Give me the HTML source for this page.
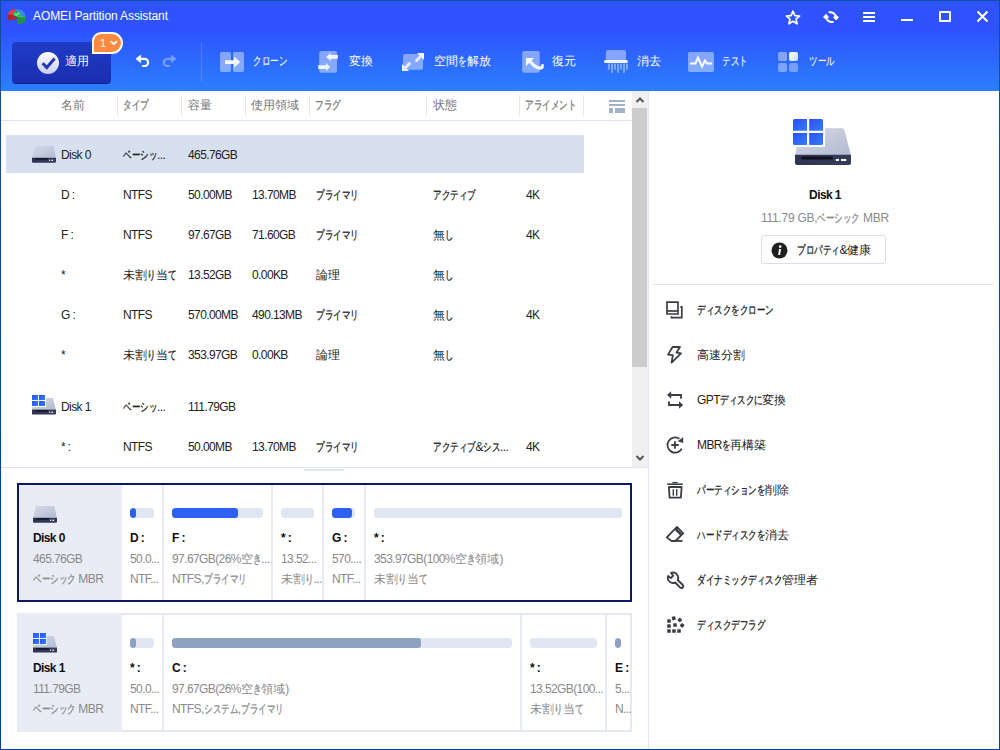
<!DOCTYPE html>
<html><head><meta charset="utf-8">
<style>
*{box-sizing:border-box;margin:0;padding:0}
html,body{width:1000px;height:750px;overflow:hidden;background:#fff}
body{font-family:"Liberation Sans",sans-serif;position:relative;color:#222}
.a{position:absolute;white-space:nowrap}
#frame{position:absolute;left:0;top:0;width:1000px;height:750px;pointer-events:none;z-index:50}
#frame i{position:absolute;display:block}
#hdr{position:absolute;left:0;top:0;width:1000px;height:91px;background:linear-gradient(to bottom,#2d52fe 0px,#2e53fe 30px,#2b7ffc 91px)}
.tt{color:#fff;font-size:12px}
.k{display:inline-block;transform:scaleX(.71);transform-origin:0 50%;-webkit-text-stroke:.3px currentColor}
.l{letter-spacing:-0.6px}
.tt .l{letter-spacing:-0.1px}
.tl .k{-webkit-text-stroke:.1px currentColor}
.rp .l{letter-spacing:-0.25px}
.tl{color:#fff;font-size:12px;top:53px;line-height:16px}
.hd{color:#777;font-size:12px;top:97px;line-height:16px}
.sep{position:absolute;top:95px;width:1px;height:21px;background:#e6eaf0}
.r{font-size:12px;line-height:16px;color:#222}
.bar{position:absolute;height:10px;border-radius:3px;background:#e1e7f2;overflow:hidden}
.bar i{position:absolute;left:0;top:0;bottom:0;background:#2d62f0;border-radius:3px}
.bar.g i{background:#8da2c0}
.pl{font-size:12px;line-height:16px;font-weight:bold;color:#111}
.ps{font-size:12px;line-height:16px;color:#8a8a8a}
.vs{position:absolute;width:2px;background:#e6eaf2}
.op{font-size:12px;line-height:16px;color:#222;left:697px}
.oi{position:absolute;left:665px;width:20px;height:20px}
</style></head><body>
<svg width="0" height="0" style="position:absolute"><defs>
<linearGradient id="dg" x1="0" y1="0" x2="1" y2="1"><stop offset="0" stop-color="#d6dae8"/><stop offset="1" stop-color="#b3bbd1"/></linearGradient>
<linearGradient id="db" x1="0" y1="0" x2="1" y2="0"><stop offset="0" stop-color="#2d3352"/><stop offset="1" stop-color="#363c58"/></linearGradient>
<linearGradient id="wg" x1="0" y1="0" x2="1" y2="1"><stop offset="0" stop-color="#2f4cf8"/><stop offset="1" stop-color="#2f80f8"/></linearGradient>
<symbol id="disk" viewBox="0 0 24 17"><path d="M3.6 0 L20.6 0 Q21.5 0 21.7 1 L23.8 11.6 L0.2 11.6 L2.5 1 Q2.7 0 3.6 0 Z" fill="url(#dg)"/><path d="M0 11.4 H24 V15.6 Q24 16.8 22.8 16.8 H1.2 Q0 16.8 0 15.6 Z" fill="url(#db)"/><rect x="0" y="11.4" width="24" height=".6" fill="#e8ebf4" opacity=".5"/><rect x="3" y="12.2" width="13" height="1.3" rx=".6" fill="#0c0f1e"/><rect x="17" y="13.7" width="1.1" height="1.2" fill="#fff"/><rect x="19.3" y="13.7" width="1.8" height="1.2" fill="#fff"/></symbol>
<symbol id="diskw" viewBox="0 0 24 20"><path d="M3 3 L20.2 3 Q20.9 3 21.1 3.8 L23.9 14.5 L0.1 14.5 L0.5 3 Z" fill="url(#dg)"/><path d="M0 14.4 H24 V18.4 Q24 19.6 22.8 19.6 H1.2 Q0 19.6 0 18.4 Z" fill="url(#db)"/><rect x="3" y="15.2" width="13" height="1.3" rx=".6" fill="#0c0f1e"/><rect x="17" y="16.6" width="1.1" height="1.2" fill="#fff"/><rect x="19.3" y="16.6" width="1.8" height="1.2" fill="#fff"/><rect x="-1" y="-1" width="15" height="13" style="fill:var(--bg)"/><g fill="url(#wg)"><rect x="0" y="0" width="6" height="5"/><rect x="7" y="0" width="6" height="5"/><rect x="0" y="6" width="6" height="5"/><rect x="7" y="6" width="6" height="5"/></g></symbol>
</defs></svg>
<div id="hdr"></div>
<div id="frame"><i style="left:0;top:0;width:1000px;height:1px;background:#10509a"></i><i style="left:0;top:749px;width:1000px;height:1px;background:#0041a8"></i><i style="left:0;top:0;width:1px;height:750px;background:linear-gradient(#10509a,#0041a8)"></i><i style="left:999px;top:0;width:1px;height:750px;background:linear-gradient(#10509a,#0041a8)"></i></div>

<!-- title bar -->
<svg class="a" style="left:0;top:0" width="30" height="30" viewBox="0 0 30 30"><path d="M8 14.5 L8 20.5 L16.8 19 L16.5 14.5 Z" fill="#b32626"/><path d="M8 14.5 Q8.3 9.6 15.8 9 L16.5 14.5 Z" fill="#ec3b3b"/><path d="M16 9 Q24.2 9.3 25.2 14.5 L25.2 17 L18 16 Z" fill="#3a88ee"/><path d="M17 15.6 L25.2 16.6 L25.2 21 Q24.5 23.6 17.4 24 Z" fill="#249144"/><path d="M17 15.6 L25.2 16.6 L25.2 17.6 L17.1 17 Z" fill="#3cc46a"/><ellipse cx="17" cy="14" rx="4" ry="2.5" fill="#25c353"/><path d="M15 14 L16.6 15.2 L19.2 12.8" fill="none" stroke="#e4ffe4" stroke-width=".9"/></svg>
<div class="a tt" style="left:33px;top:8px;line-height:16px"><span class="l">AOMEI Partition Assistant</span></div>
<!-- window controls -->
<svg class="a" style="left:784px;top:8.5px" width="18" height="18" viewBox="0 0 18 18"><path d="M9 2.2 L10.9 6.6 L15.6 7 L12 10.1 L13.1 14.8 L9 12.3 L4.9 14.8 L6 10.1 L2.4 7 L7.1 6.6 Z" fill="none" stroke="#fff" stroke-width="1.7" stroke-linejoin="round"/></svg>
<svg class="a" style="left:822px;top:8px" width="18" height="18" viewBox="0 0 18 18"><path d="M7.4 4.2 Q12.2 3.6 14 8.6" fill="none" stroke="#fff" stroke-width="2" stroke-linecap="round"/><path d="M10.8 14 Q6 14.6 4 9.6" fill="none" stroke="#fff" stroke-width="2" stroke-linecap="round"/><path d="M11 9.2 L14 6.8 L17 9.2 L14 12.4 Z" fill="#fff"/><path d="M1 9.2 L4 5.8 L7 9.2 L4 11.4 Z" fill="#fff"/></svg>
<svg class="a" style="left:860px;top:8px" width="18" height="18" viewBox="0 0 18 18"><rect x="3" y="4" width="12" height="2" fill="#fff"/><rect x="3" y="8" width="12" height="2" fill="#fff"/><rect x="3" y="12" width="12" height="2" fill="#fff"/></svg>
<div class="a" style="left:901px;top:19px;width:12px;height:2px;background:#fff"></div>
<div class="a" style="left:939px;top:11px;width:12px;height:11px;border:2px solid #fff;border-radius:1px"></div>
<svg class="a" style="left:974px;top:8px" width="18" height="18" viewBox="0 0 18 18"><path d="M3.5 3.5 L13.5 13.5 M13.5 3.5 L3.5 13.5" stroke="#fff" stroke-width="2"/></svg>

<!-- toolbar -->
<div class="a" style="left:12px;top:42px;width:99px;height:41px;border-radius:4px;background:linear-gradient(#1f3cc6,#1a2db0);box-shadow:0 1px 0 #13208a"></div>
<div class="a" style="left:37px;top:52px;width:22px;height:22px;border-radius:50%;background:linear-gradient(#ffffff,#c8ccf0)"></div>
<svg class="a" style="left:37px;top:52px" width="22" height="22" viewBox="0 0 22 22"><path d="M5.6 11.3 L9.8 15.6 L17.6 6.6" fill="none" stroke="#2536b4" stroke-width="3"/></svg>
<div class="a tl" style="left:65px">適用</div>
<svg class="a" style="left:90px;top:31px" width="34" height="24" viewBox="0 0 34 24"><path d="M3 22 L3 10 A8 8 0 0 1 11 2 L22 2 A10 10 0 0 1 22 22 Z" fill="#ff8a3f" stroke="#fff" stroke-width="2"/><path d="M21.2 10.6 L23.8 13.2 L26.4 10.6" fill="none" stroke="#fff" stroke-width="1.8" stroke-linecap="round"/></svg>
<div class="a" style="left:100px;top:35px;font-size:11px;line-height:16px;color:#fff"><span class="l">1</span></div>
<svg class="a" style="left:134px;top:52px" width="18" height="18" viewBox="0 0 18 18"><path d="M6 6.8 H10.5 A3.6 3.6 0 0 1 10.5 14 H8.2" fill="none" stroke="#fff" stroke-width="2.2"/><path d="M1.9 6.8 L6.7 3.1 L6.7 10.7 Z" fill="#fff" stroke="#fff" stroke-width=".6" stroke-linejoin="round"/></svg>
<svg class="a" style="left:160px;top:52px" width="18" height="18" viewBox="0 0 18 18"><g opacity=".35"><path d="M12 6.8 H7.5 A3.6 3.6 0 0 0 7.5 14 H9.8" fill="none" stroke="#fff" stroke-width="2.2"/><path d="M16.1 6.8 L11.3 3.1 L11.3 10.7 Z" fill="#fff" stroke="#fff" stroke-width=".6" stroke-linejoin="round"/></g></svg>
<div class="a" style="left:201px;top:42px;width:1px;height:39px;background:rgba(255,255,255,.18)"></div>

<!-- clone -->
<svg class="a" style="left:219px;top:51px" width="26" height="22" viewBox="0 0 26 22"><rect x="1" y="1" width="11" height="20" rx="2" fill="rgba(255,255,255,.42)"/><rect x="14" y="1" width="11" height="20" rx="2" fill="rgba(255,255,255,.42)"/><path d="M6 9.3 L15 9.3 L15 5.5 L21.3 11.1 L15 16.7 L15 13 L6 13 Z" fill="#f2f5fd"/></svg>
<div class="a tl" style="left:253px"><span class="k" style="margin-right:-13.92px">クローン</span></div>
<!-- convert -->
<svg class="a" style="left:318px;top:50px" width="22" height="24" viewBox="0 0 22 24"><rect x="1.2" y="1" width="17.8" height="21.7" rx="2" fill="rgba(255,255,255,.42)"/><path d="M19.9 5 L12.8 5 L12.8 3 L8.1 6.9 L12.8 10.9 L12.8 8.8 L19.9 8.8 Z" fill="#f2f5fd"/><path d="M0.2 15.2 L8 15.2 L8 13 L12.2 17 L8 21 L8 18.9 L0.2 18.9 Z" fill="#f2f5fd"/></svg>
<div class="a tl" style="left:349px">変換</div>
<!-- free space -->
<svg class="a" style="left:401px;top:51px" width="24" height="22" viewBox="0 0 24 22"><rect x="2" y="2.9" width="20" height="15.8" rx="2" fill="rgba(255,255,255,.42)"/><path d="M16 2 L23 2 L23 9 Z" fill="#f2f5fd"/><path d="M20 5 L15.5 9.5" stroke="#e6ecfa" stroke-width="3" stroke-linecap="round"/><path d="M1 13 L1 20 L8 20 Z" fill="#f2f5fd"/><path d="M4 17 L8.5 12.5" stroke="#e6ecfa" stroke-width="3" stroke-linecap="round"/></svg>
<div class="a tl" style="left:434px">空間<span class="k" style="margin-right:-3.48px">を</span>解放</div>
<!-- recovery -->
<svg class="a" style="left:521px;top:50px" width="24" height="24" viewBox="0 0 24 24"><rect x="1.2" y="1.1" width="17.5" height="21.6" rx="2" fill="rgba(255,255,255,.42)"/><path d="M5 8 L13 8 L5 16 Z" fill="#fff"/><path d="M9.5 11.8 Q14 17.6 19 18.2 Q21.6 18.2 21.4 15.6" fill="none" stroke="#f2f5fd" stroke-width="3.2" stroke-linecap="round"/></svg>
<div class="a tl" style="left:552px">復元</div>
<!-- wipe -->
<svg class="a" style="left:603px;top:49px" width="26" height="26" viewBox="0 0 26 26"><rect x="2.9" y="1" width="20.1" height="10.8" rx="2" fill="rgba(255,255,255,.42)"/><g fill="rgba(255,255,255,.4)"><rect x="4.9" y="14.5" width="2" height="6.2"/><rect x="8" y="14.5" width="2" height="9.3"/><rect x="10.9" y="14.5" width="2" height="6.2"/><rect x="14" y="14.5" width="2" height="9.3"/><rect x="16.9" y="14.5" width="2" height="6.2"/><rect x="20" y="14.5" width="2" height="9.3"/><rect x="22.9" y="14.5" width="2" height="6.2"/></g><rect x="1" y="11" width="23.8" height="3" rx="1.5" fill="#f2f5fd"/></svg>
<div class="a tl" style="left:637px">消去</div>
<!-- test -->
<svg class="a" style="left:688px;top:52px" width="26" height="20" viewBox="0 0 26 20"><rect x="0" y="0" width="26" height="20" rx="2" fill="rgba(255,255,255,.42)"/><path d="M2 11.5 L7.5 11.5 L10 5.5 L14 14.5 L17 8.5 L19 11.5 L24 11.5" fill="none" stroke="#fff" stroke-width="2"/></svg>
<div class="a tl" style="left:722px"><span class="k" style="margin-right:-10.44px">テスト</span></div>
<!-- tools -->
<svg class="a" style="left:778px;top:52px" width="20" height="20" viewBox="0 0 20 20"><defs><linearGradient id="tw" x1="0" y1="0" x2="1" y2="1"><stop offset="0" stop-color="#fff"/><stop offset="1" stop-color="#c7d8f8"/></linearGradient></defs><rect x="0" y="0" width="9" height="9" rx="2" fill="rgba(255,255,255,.42)"/><rect x="11" y="0" width="9" height="9" rx="2" fill="url(#tw)"/><rect x="0" y="11" width="9" height="9" rx="2" fill="rgba(255,255,255,.38)"/><rect x="11" y="11" width="9" height="9" rx="2" fill="rgba(255,255,255,.34)"/></svg>
<div class="a tl" style="left:809px"><span class="k" style="margin-right:-10.44px">ツール</span></div>

<!-- table header -->
<div class="a hd" style="left:61px">名前</div>
<div class="sep" style="left:117px"></div>
<div class="a hd" style="left:123px"><span class="k" style="margin-right:-10.44px">タイプ</span></div>
<div class="sep" style="left:181px"></div>
<div class="a hd" style="left:188px">容量</div>
<div class="sep" style="left:245px"></div>
<div class="a hd" style="left:251px">使用領域</div>
<div class="sep" style="left:309px"></div>
<div class="a hd" style="left:315px"><span class="k" style="margin-right:-10.44px">フラグ</span></div>
<div class="sep" style="left:426px"></div>
<div class="a hd" style="left:433px">状態</div>
<div class="sep" style="left:519px"></div>
<div class="a hd" style="left:525px"><span class="k" style="margin-right:-20.88px">アライメント</span></div>
<div class="sep" style="left:583px"></div>
<svg class="a" style="left:609px;top:100px" width="16" height="13" viewBox="0 0 16 13"><rect x="0" y="0" width="16" height="2" fill="#a3b1c8"/><rect x="0" y="4" width="16" height="2" fill="#a3b1c8"/><rect x="0" y="8" width="4" height="5" fill="#a3b1c8"/><rect x="6" y="8" width="10" height="5" fill="#a3b1c8"/></svg>
<div class="a" style="left:1px;top:120px;width:631px;height:1px;background:#dde4ee"></div>

<!-- scrollbar -->
<div class="a" style="left:632px;top:91px;width:16px;height:376px;background:#f0f0f0"></div>
<div class="a" style="left:632px;top:108px;width:15px;height:259px;background:#cdcdcd"></div>
<svg class="a" style="left:632px;top:94px" width="16" height="12" viewBox="0 0 16 12"><path d="M4.5 8 L8 4.5 L11.5 8" fill="none" stroke="#555" stroke-width="2"/></svg>
<svg class="a" style="left:632px;top:452px" width="16" height="12" viewBox="0 0 16 12"><path d="M4.5 4 L8 7.5 L11.5 4" fill="none" stroke="#555" stroke-width="2"/></svg>
<div class="a" style="left:648px;top:91px;width:1px;height:658px;background:#dfe5f2"></div>

<!-- rows -->
<div class="a" style="left:6px;top:135px;width:578px;height:38px;background:#d6e0ee"></div>
<svg class="a" style="left:32px;top:146px" width="24" height="17"><use href="#disk"/></svg>
<div class="a r" style="left:61px;top:147px"><span class="l">Disk 0</span></div>
<div class="a r" style="left:123px;top:147px"><span class="k" style="margin-right:-13.92px">ベーシッ</span><span class="l">...</span></div>
<div class="a r" style="left:188px;top:147px"><span class="l">465.76GB</span></div>

<div class="a r" style="left:61px;top:187px"><span class="l">D :</span></div>
<div class="a r" style="left:123px;top:187px"><span class="l">NTFS</span></div>
<div class="a r" style="left:188px;top:187px"><span class="l">50.00MB</span></div>
<div class="a r" style="left:252px;top:187px"><span class="l">13.70MB</span></div>
<div class="a r" style="left:316px;top:187px"><span class="k" style="margin-right:-17.40px">プライマリ</span></div>
<div class="a r" style="left:433px;top:187px"><span class="k" style="margin-right:-17.40px">アクティブ</span></div>
<div class="a r" style="left:526px;top:187px"><span class="l">4K</span></div>

<div class="a r" style="left:61px;top:227px"><span class="l">F :</span></div>
<div class="a r" style="left:123px;top:227px"><span class="l">NTFS</span></div>
<div class="a r" style="left:188px;top:227px"><span class="l">97.67GB</span></div>
<div class="a r" style="left:252px;top:227px"><span class="l">71.60GB</span></div>
<div class="a r" style="left:316px;top:227px"><span class="k" style="margin-right:-17.40px">プライマリ</span></div>
<div class="a r" style="left:433px;top:227px">無<span class="k" style="margin-right:-3.48px">し</span></div>
<div class="a r" style="left:526px;top:227px"><span class="l">4K</span></div>

<div class="a r" style="left:61px;top:267px"><span class="l">*</span></div>
<div class="a r" style="left:123px;top:267px">未割<span class="k" style="margin-right:-3.48px">り</span>当<span class="k" style="margin-right:-3.48px">て</span></div>
<div class="a r" style="left:188px;top:267px"><span class="l">13.52GB</span></div>
<div class="a r" style="left:252px;top:267px"><span class="l">0.00KB</span></div>
<div class="a r" style="left:316px;top:267px">論理</div>
<div class="a r" style="left:433px;top:267px">無<span class="k" style="margin-right:-3.48px">し</span></div>

<div class="a r" style="left:61px;top:307px"><span class="l">G :</span></div>
<div class="a r" style="left:123px;top:307px"><span class="l">NTFS</span></div>
<div class="a r" style="left:188px;top:307px"><span class="l">570.00MB</span></div>
<div class="a r" style="left:252px;top:307px"><span class="l">490.13MB</span></div>
<div class="a r" style="left:316px;top:307px"><span class="k" style="margin-right:-17.40px">プライマリ</span></div>
<div class="a r" style="left:433px;top:307px">無<span class="k" style="margin-right:-3.48px">し</span></div>
<div class="a r" style="left:526px;top:307px"><span class="l">4K</span></div>

<div class="a r" style="left:61px;top:347px"><span class="l">*</span></div>
<div class="a r" style="left:123px;top:347px">未割<span class="k" style="margin-right:-3.48px">り</span>当<span class="k" style="margin-right:-3.48px">て</span></div>
<div class="a r" style="left:188px;top:347px"><span class="l">353.97GB</span></div>
<div class="a r" style="left:252px;top:347px"><span class="l">0.00KB</span></div>
<div class="a r" style="left:316px;top:347px">論理</div>
<div class="a r" style="left:433px;top:347px">無<span class="k" style="margin-right:-3.48px">し</span></div>

<svg class="a" style="left:32px;top:395px" width="24" height="20"><use href="#diskw" style="--bg:#fff"/></svg>
<div class="a r" style="left:61px;top:399px"><span class="l">Disk 1</span></div>
<div class="a r" style="left:123px;top:399px"><span class="k" style="margin-right:-13.92px">ベーシッ</span><span class="l">...</span></div>
<div class="a r" style="left:188px;top:399px"><span class="l">111.79GB</span></div>

<div class="a r" style="left:61px;top:439px"><span class="l">* :</span></div>
<div class="a r" style="left:123px;top:439px"><span class="l">NTFS</span></div>
<div class="a r" style="left:188px;top:439px"><span class="l">50.00MB</span></div>
<div class="a r" style="left:252px;top:439px"><span class="l">13.70MB</span></div>
<div class="a r" style="left:316px;top:439px"><span class="k" style="margin-right:-17.40px">プライマリ</span></div>
<div class="a r" style="left:433px;top:439px"><span class="k" style="margin-right:-17.40px">アクティブ</span><span class="l">&amp;</span><span class="k" style="margin-right:-6.96px">シス</span><span class="l">...</span></div>
<div class="a r" style="left:526px;top:439px"><span class="l">4K</span></div>

<div class="a" style="left:1px;top:467px;width:647px;height:1px;background:#dfe5f0"></div>
<div class="a" style="left:304px;top:469px;width:40px;height:2px;background:#e2e8f2"></div>

<!-- disk 0 card -->
<div class="a" style="left:17px;top:483px;width:615px;height:119px;border:2px solid #0b1a63"></div>
<div class="a" style="left:19px;top:485px;width:103px;height:115px;background:#e9ecf4"></div>
<svg class="a" style="left:33px;top:506px" width="24" height="17"><use href="#disk"/></svg>
<div class="a pl" style="left:33px;top:530px"><span class="l">Disk 0</span></div>
<div class="a ps" style="left:33px;top:551px"><span class="l">465.76GB</span></div>
<div class="a ps" style="left:33px;top:571px"><span class="k" style="margin-right:-17.40px">ベーシック</span><span class="l"> MBR</span></div>
<div class="vs" style="left:162px;top:485px;height:115px"></div>
<div class="vs" style="left:271px;top:485px;height:115px"></div>
<div class="vs" style="left:322px;top:485px;height:115px"></div>
<div class="vs" style="left:364px;top:485px;height:115px"></div>

<div class="bar" style="left:130px;top:508px;width:24px"><i style="width:6px"></i></div>
<div class="a pl" style="left:130px;top:530px"><span class="l">D :</span></div>
<div class="a ps" style="left:130px;top:551px"><span class="l">50.0...</span></div>
<div class="a ps" style="left:130px;top:571px"><span class="l">NTF...</span></div>

<div class="bar" style="left:172px;top:508px;width:91px"><i style="width:66px"></i></div>
<div class="a pl" style="left:172px;top:530px"><span class="l">F :</span></div>
<div class="a ps" style="left:172px;top:551px"><span class="l">97.67GB(26%</span>空<span class="k" style="margin-right:-3.48px">き</span><span class="l">...</span></div>
<div class="a ps" style="left:172px;top:571px"><span class="l">NTFS,</span><span class="k" style="margin-right:-17.40px">プライマリ</span></div>

<div class="bar" style="left:281px;top:508px;width:33px"></div>
<div class="a pl" style="left:281px;top:530px"><span class="l">* :</span></div>
<div class="a ps" style="left:281px;top:551px"><span class="l">13.52...</span></div>
<div class="a ps" style="left:281px;top:571px">未割<span class="k" style="margin-right:-3.48px">り</span><span class="l">...</span></div>

<div class="bar" style="left:332px;top:508px;width:23px"><i style="width:20px"></i></div>
<div class="a pl" style="left:332px;top:530px"><span class="l">G :</span></div>
<div class="a ps" style="left:332px;top:551px"><span class="l">570....</span></div>
<div class="a ps" style="left:332px;top:571px"><span class="l">NTF...</span></div>

<div class="bar" style="left:374px;top:508px;width:248px"></div>
<div class="a pl" style="left:374px;top:530px"><span class="l">* :</span></div>
<div class="a ps" style="left:374px;top:551px"><span class="l">353.97GB(100%</span>空<span class="k" style="margin-right:-3.48px">き</span>領域<span class="l">)</span></div>
<div class="a ps" style="left:374px;top:571px">未割<span class="k" style="margin-right:-3.48px">り</span>当<span class="k" style="margin-right:-3.48px">て</span></div>

<!-- disk 1 card -->
<div class="a" style="left:17px;top:613px;width:615px;height:119px;border:2px solid #e4e8f1"></div>
<div class="a" style="left:17px;top:613px;width:105px;height:119px;background:#e9ecf4"></div>
<svg class="a" style="left:33px;top:633px" width="24" height="20"><use href="#diskw" style="--bg:#e9ecf4"/></svg>
<div class="a pl" style="left:33px;top:660px"><span class="l">Disk 1</span></div>
<div class="a ps" style="left:33px;top:681px"><span class="l">111.79GB</span></div>
<div class="a ps" style="left:33px;top:701px"><span class="k" style="margin-right:-17.40px">ベーシック</span><span class="l"> MBR</span></div>
<div class="vs" style="left:162px;top:615px;height:115px"></div>
<div class="vs" style="left:520px;top:615px;height:115px"></div>
<div class="vs" style="left:605px;top:615px;height:115px"></div>

<div class="bar g" style="left:130px;top:638px;width:24px"><i style="width:6px"></i></div>
<div class="a pl" style="left:130px;top:660px"><span class="l">* :</span></div>
<div class="a ps" style="left:130px;top:681px"><span class="l">50.0...</span></div>
<div class="a ps" style="left:130px;top:701px"><span class="l">NTF...</span></div>

<div class="bar g" style="left:172px;top:638px;width:340px"><i style="width:249px"></i></div>
<div class="a pl" style="left:172px;top:660px"><span class="l">C :</span></div>
<div class="a ps" style="left:172px;top:681px"><span class="l">97.67GB(26%</span>空<span class="k" style="margin-right:-3.48px">き</span>領域<span class="l">)</span></div>
<div class="a ps" style="left:172px;top:701px"><span class="l">NTFS,</span><span class="k" style="margin-right:-13.92px">システム</span><span class="l">,</span><span class="k" style="margin-right:-17.40px">プライマリ</span></div>

<div class="bar" style="left:530px;top:638px;width:67px"></div>
<div class="a pl" style="left:530px;top:660px"><span class="l">* :</span></div>
<div class="a ps" style="left:530px;top:681px"><span class="l">13.52GB(100...</span></div>
<div class="a ps" style="left:530px;top:701px">未割<span class="k" style="margin-right:-3.48px">り</span>当<span class="k" style="margin-right:-3.48px">て</span></div>

<div class="bar g" style="left:615px;top:638px;width:6px"><i style="width:6px"></i></div>
<div class="a pl" style="left:615px;top:660px"><span class="l">E :</span></div>
<div class="a ps" style="left:615px;top:681px"><span class="l">5...</span></div>
<div class="a ps" style="left:615px;top:701px"><span class="l">N...</span></div>

<!-- right panel -->
<svg class="a" style="left:785px;top:110px" width="70" height="60" viewBox="785 110 70 60"><path d="M800 128.2 L842.4 128.2 Q844 128.2 844.4 130 L850.8 155 L795.2 155 Z" fill="url(#dg)"/><path d="M795 154.8 H851 V163 Q851 165 849 165 H797 Q795 165 795 163 Z" fill="url(#db)"/><rect x="801" y="156.4" width="32" height="3.2" rx="1.5" fill="#10131f"/><rect x="835.8" y="159" width="3.2" height="2" fill="#fff"/><rect x="841" y="159" width="5.2" height="2" fill="#fff"/><rect x="791" y="117" width="34" height="30" fill="#fff"/><g fill="url(#wg)"><path d="M794.5 119 H807 V130.8 H793 V120.5 Q793 119 794.5 119 Z"/><path d="M809.2 119 H821.5 Q823 119 823 120.5 V130.8 H809.2 Z"/><path d="M793 133 H807 V145 H794.5 Q793 145 793 143.5 Z"/><path d="M809.2 133 H823 V143.5 Q823 145 821.5 145 H809.2 Z"/></g></svg>
<div class="a" style="left:650px;width:350px;top:187px;text-align:center;font-size:12px;line-height:16px;font-weight:bold;color:#111"><span class="l">Disk 1</span></div>
<div class="a rp" style="left:650px;width:350px;top:210px;text-align:center;font-size:12px;line-height:16px;color:#8a8a8a"><span class="l">111.79 GB,</span><span class="k" style="margin-right:-17.40px">ベーシック</span><span class="l"> MBR</span></div>
<div class="a" style="left:761px;top:235px;width:125px;height:29px;border:1px solid #d9dee8;border-radius:3px;background:#fff"></div>
<svg class="a" style="left:771px;top:242px" width="17" height="17" viewBox="0 0 17 17"><circle cx="8.5" cy="8.5" r="8" fill="#1e1e1e"/><circle cx="9.2" cy="4.6" r="1.3" fill="#fff"/><path d="M8 7 L10 7 L9.1 13 L7.2 13 Z" fill="#fff"/></svg>
<div class="a" style="left:797px;top:242px;font-size:12px;line-height:16px;color:#222"><span class="k" style="margin-right:-17.40px">プロパティ</span><span class="l">&amp;</span>健康</div>
<div class="a" style="left:653px;top:284px;width:341px;height:1px;background:#e2e7ef"></div>

<svg class="oi" style="top:300px" viewBox="0 0 20 20"><g fill="none" stroke="#3b3e44" stroke-width="1.7"><path d="M2 2.2 H13 V14 H2 Z"/><path d="M2 11 H13"/><path d="M15.3 6.8 H16.8 V17.6 H6.4 V16.2"/></g></svg>
<div class="a op" style="top:302px"><span class="k" style="margin-right:-31.32px">ディスクをクローン</span></div>
<svg class="oi" style="top:345px" viewBox="0 0 20 20"><path d="M7.6 2 L15 2 L11.5 7.6 L16 8.4 L6.6 17.6 L7.8 10.2 L3 9.6 Z" fill="none" stroke="#3b3e44" stroke-width="1.8" stroke-linejoin="round"/></svg>
<div class="a op" style="top:347px">高速分割</div>
<svg class="oi" style="top:390px" viewBox="0 0 20 20"><g fill="none" stroke="#3b3e44" stroke-width="1.8"><path d="M5.5 5 H16 V8.8"/><path d="M4 11.4 V15 H14.5"/></g><g fill="#3b3e44"><path d="M2 5 L6.2 1.3 L6.2 8.7 Z"/><path d="M18.2 15 L14 11.3 L14 18.7 Z"/></g></svg>
<div class="a op" style="top:392px"><span class="l">GPT</span><span class="k" style="margin-right:-17.40px">ディスクに</span>変換</div>
<svg class="oi" style="top:435px" viewBox="0 0 20 20"><path d="M16.8 13.6 A7.6 7.6 0 1 1 14.4 3.8" fill="none" stroke="#3b3e44" stroke-width="1.8"/><path d="M18.2 2.2 L18.2 8 L12.6 6.2 Z" fill="#3b3e44"/><path d="M10 6.3 V13.7 M6.3 10 H13.7" stroke="#3b3e44" stroke-width="1.8"/></svg>
<div class="a op" style="top:437px"><span class="l">MBR</span><span class="k" style="margin-right:-3.48px">を</span>再構築</div>
<svg class="oi" style="top:480px" viewBox="0 0 20 20"><g fill="none" stroke="#3b3e44"><path d="M2.2 4.2 H17.8" stroke-width="1.6"/><path d="M7.4 2.6 H12.6" stroke-width="1.4"/><path d="M3.9 7 H16.6 L15.9 17.6 H4.6 Z" stroke-width="1.8" stroke-linejoin="round"/><path d="M8.3 9.6 V15.3 M11.7 9.6 V15.3" stroke-width="1.4" stroke-linecap="round"/></g></svg>
<div class="a op" style="top:482px"><span class="k" style="margin-right:-27.84px">パーティションを</span>削除</div>
<svg class="oi" style="top:525px" viewBox="0 0 20 20"><g fill="none" stroke="#3b3e44" stroke-width="1.8" stroke-linejoin="round"><path d="M12 1.9 L18.2 8.3 L10.3 16 L6.6 16 L1.8 12.4 Z"/><path d="M10.6 4 L16.1 9.6" stroke-width="2.6"/><path d="M6.5 16 H17.6"/></g></svg>
<div class="a op" style="top:527px"><span class="k" style="margin-right:-27.84px">ハードディスクを</span>消去</div>
<svg class="oi" style="top:570px" viewBox="0 0 20 20"><path d="M6.22 2.91 A5.2 5.2 0 0 1 12.72 9.98 L17.77 15.03 A1.8 1.8 0 0 1 15.23 17.57 L10.18 12.52 A5.2 5.2 0 0 1 3.11 6.02 L5.8 8.1 L8.1 5.8 Z" fill="none" stroke="#3b3e44" stroke-width="1.9" stroke-linejoin="round"/></svg>
<div class="a op" style="top:572px"><span class="k" style="margin-right:-34.80px">ダイナミックディスク</span>管理者</div>
<svg class="oi" style="top:615px" viewBox="0 0 20 20"><g fill="#3b3e44"><rect x="2.2" y="4.2" width="3.6" height="3.6" rx=".6"/><rect x="2.2" y="9.2" width="3.6" height="3.6" rx=".6"/><rect x="2.2" y="14.2" width="3.6" height="3.6" rx=".6"/><rect x="7.2" y="14.2" width="3.6" height="3.6" rx=".6"/><rect x="12.2" y="14.2" width="3.6" height="3.6" rx=".6"/><rect x="8.2" y="8.2" width="3.6" height="3.6" rx=".6"/><rect x="-1.8" y="-1.8" width="3.6" height="3.6" rx=".6" transform="translate(8.8 3.3) rotate(-15)"/><rect x="-1.8" y="-1.8" width="3.6" height="3.6" rx=".6" transform="translate(14.8 5) rotate(40)"/><rect x="-1.8" y="-1.8" width="3.6" height="3.6" rx=".6" transform="translate(17.2 10.3) rotate(40)"/></g></svg>
<div class="a op" style="top:617px"><span class="k" style="margin-right:-27.84px">ディスクデフラグ</span></div>

</body></html>
